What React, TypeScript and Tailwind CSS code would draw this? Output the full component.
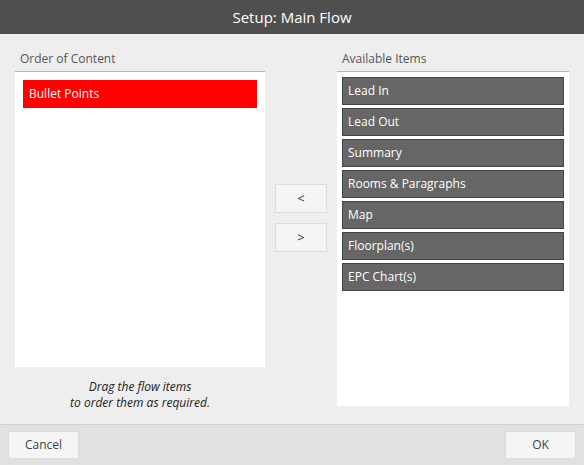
import React from "react";

const items = ["Lead In", "Lead Out", "Summary", "Rooms & Paragraphs", "Map", "Floorplan(s)", "EPC Chart(s)"];

export default function App() {
  return (
    <div className="w-[584px] h-[465px] flex flex-col bg-[#eeeeee] overflow-hidden" style={{ fontFamily: '"Open Sans", "Noto Sans", sans-serif' }}>
      <div className="h-[34px] shrink-0 bg-[#4f4f4f] flex items-center justify-center text-white text-[15px]">
        Setup: Main Flow
      </div>
      <div className="flex-1 flex pt-[14px] px-[15px]">
        <div className="w-[250px] flex flex-col">
          <div className="h-[24px] pl-[5px] text-[12px] leading-[22px] text-[#555555] border-b border-[#b5b5b5]">Order of Content</div>
          <div className="h-[295px] bg-white p-2">
            <div className="h-[28px] bg-[#ff0000] text-white text-[12px] flex items-center pl-[6px]">Bullet Points</div>
          </div>
          <div className="mt-[12px] text-center italic text-[12px] leading-[16px] text-[#222222]">
            Drag the flow items
            <br />
            to order them as required.
          </div>
        </div>
        <div className="w-[72px] flex flex-col items-center pt-[136px] gap-[10px]">
          <button className="w-[52px] h-[29px] bg-[#f5f5f5] border border-[#dddddd] text-[13px] text-[#333344] flex items-center justify-center">&lt;</button>
          <button className="w-[52px] h-[29px] bg-[#f5f5f5] border border-[#dddddd] text-[13px] text-[#333344] flex items-center justify-center">&gt;</button>
        </div>
        <div className="w-[232px] flex flex-col">
          <div className="h-[24px] pl-[5px] text-[12px] leading-[22px] text-[#555555] border-b border-[#b5b5b5]">Available Items</div>
          <div className="h-[334px] bg-white p-[5px] flex flex-col gap-[3px]">
            {items.map((it) => (
              <div key={it} className="h-[28px] bg-[#666666] border border-[#444444] text-white text-[12px] flex items-center pl-[5px]">
                {it}
              </div>
            ))}
          </div>
        </div>
      </div>
      <div className="h-[41px] shrink-0 bg-[#e1e1e1] border-t border-[#d0d0d0] flex items-center justify-between px-[8px]">
        <button className="w-[71px] h-[28px] bg-[#f5f5f5] border border-[#dddddd] text-[12px] text-[#444444]">Cancel</button>
        <button className="w-[71px] h-[28px] bg-[#f5f5f5] border border-[#dddddd] text-[12px] text-[#444444]">OK</button>
      </div>
    </div>
  );
}
